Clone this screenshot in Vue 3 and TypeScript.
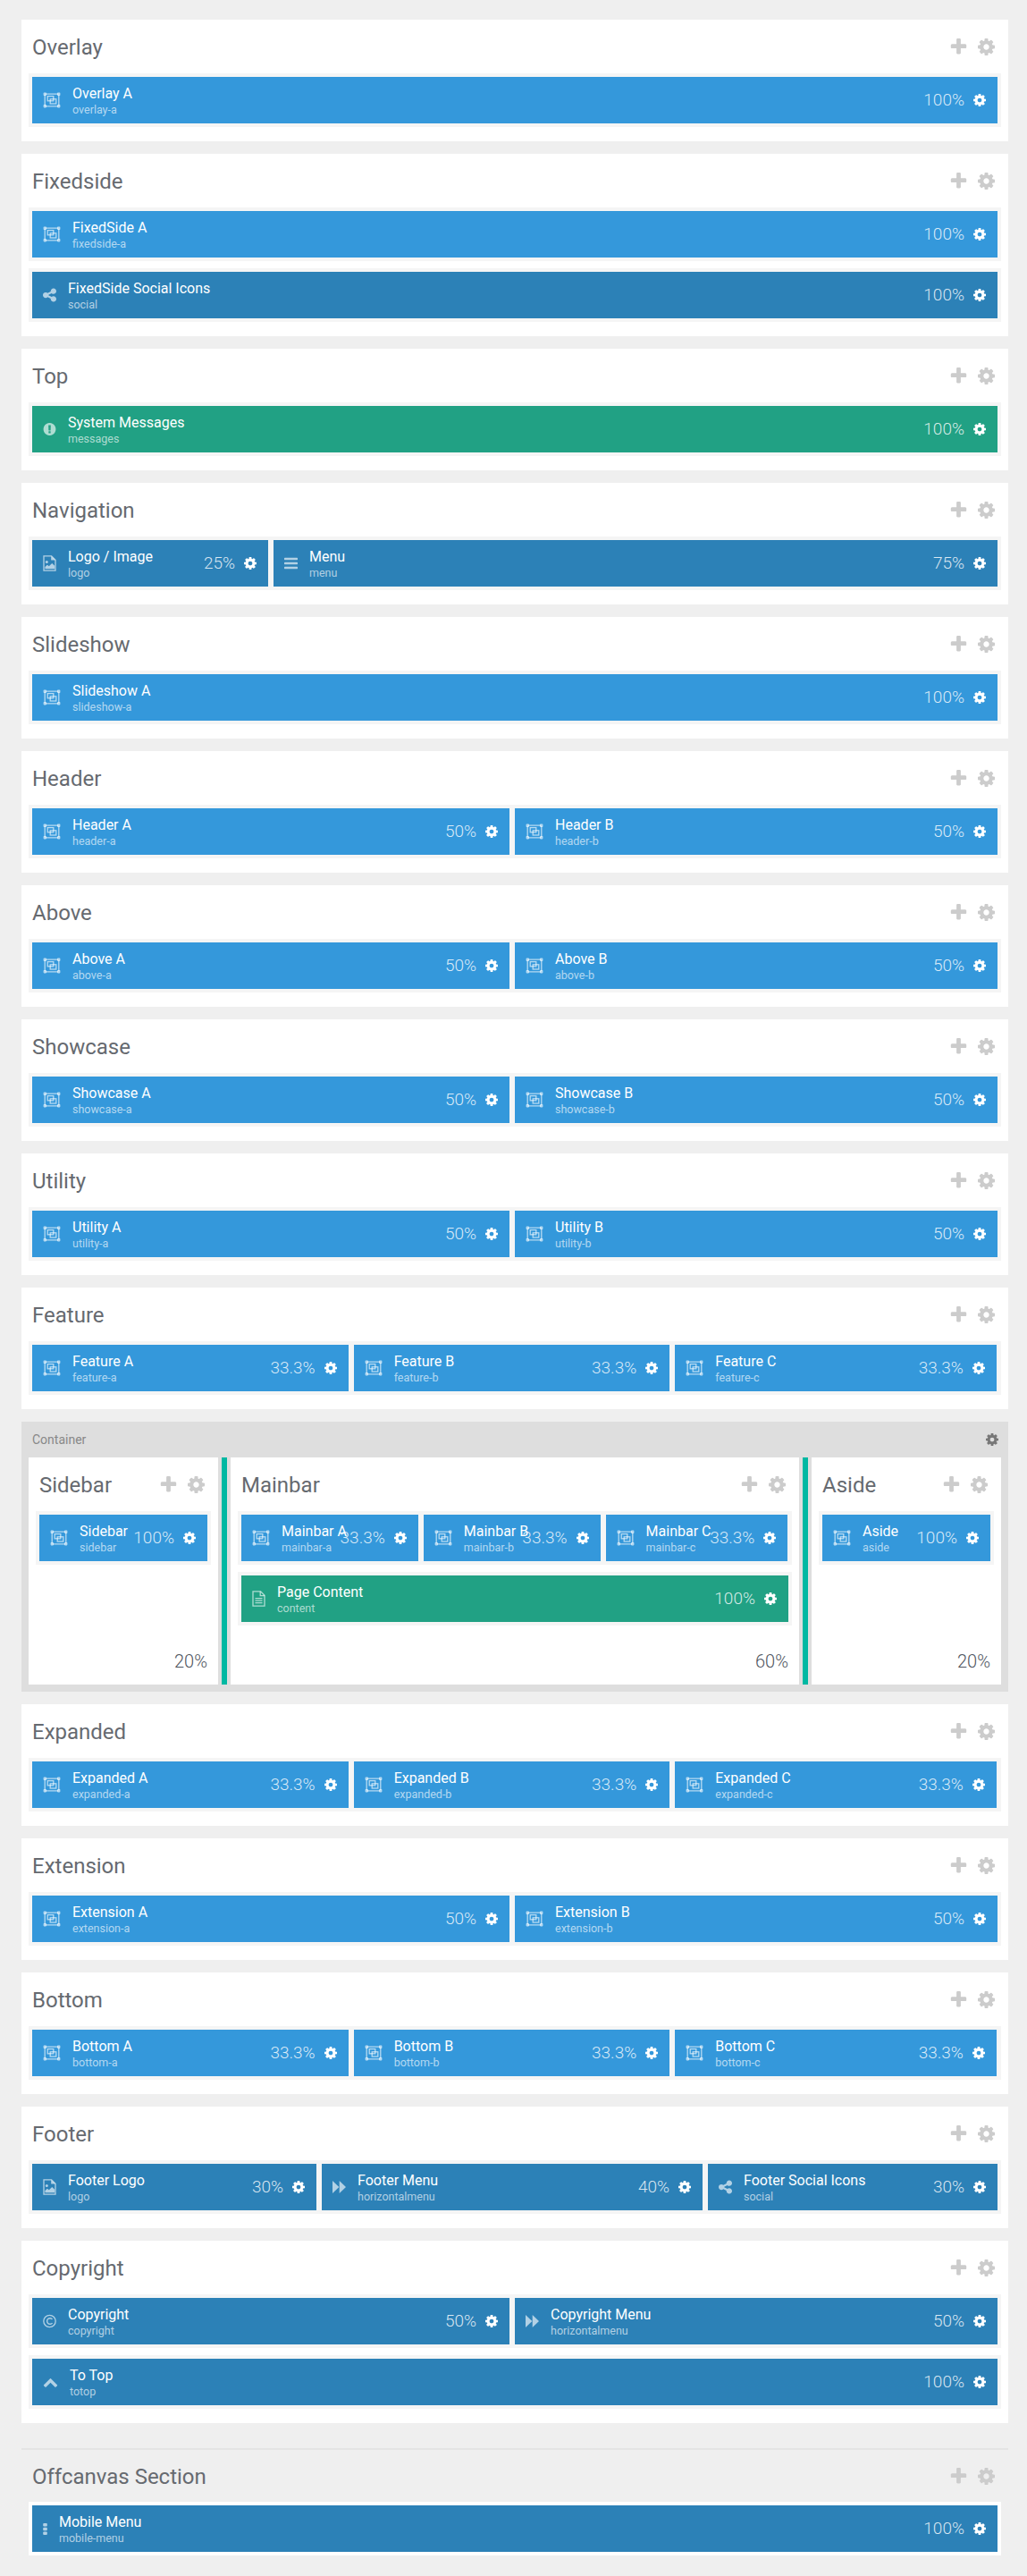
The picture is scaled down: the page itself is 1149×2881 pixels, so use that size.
<script setup lang="ts">
  type IconName = 'group' | 'share' | 'alert' | 'image' | 'bars' | 'file' | 'forward' | 'copyright' | 'up' | 'dots';

  interface Block {
    name: string;
    sub: string;
    size: string;
    icon: IconName;
    tone: 'blue' | 'dark' | 'green';
  }

  interface Section {
    title: string;
    rows: Block[][];
    share?: number;
    offcanvas?: boolean;
  }

  interface Group {
    label?: string;
    sections: Section[];
  }

  const block = (name: string, sub: string, size: string, icon: IconName = 'group', tone: Block['tone'] = 'blue'): Block => ({
    name,
    sub,
    size,
    icon,
    tone,
  });

  // particle positions: "Foo A" + "foo-a" for each letter
  const positions = (title: string, letters: string, size: string): Block[] =>
    letters.split('').map((l) => block(`${title} ${l.toUpperCase()}`, `${title.toLowerCase()}-${l}`, size));

  const plain = (title: string, ...rows: Block[][]): Group => ({ sections: [{ title, rows }] });

  const groups: Group[] = [
    plain('Overlay', [block('Overlay A', 'overlay-a', '100')]),
    plain(
      'Fixedside',
      [block('FixedSide A', 'fixedside-a', '100')],
      [block('FixedSide Social Icons', 'social', '100', 'share', 'dark')],
    ),
    plain('Top', [block('System Messages', 'messages', '100', 'alert', 'green')]),
    plain('Navigation', [block('Logo / Image', 'logo', '25', 'image', 'dark'), block('Menu', 'menu', '75', 'bars', 'dark')]),
    plain('Slideshow', positions('Slideshow', 'a', '100')),
    plain('Header', positions('Header', 'ab', '50')),
    plain('Above', positions('Above', 'ab', '50')),
    plain('Showcase', positions('Showcase', 'ab', '50')),
    plain('Utility', positions('Utility', 'ab', '50')),
    plain('Feature', positions('Feature', 'abc', '33.3')),
    {
      label: 'Container',
      sections: [
        { title: 'Sidebar', share: 20, rows: [[block('Sidebar', 'sidebar', '100')]] },
        {
          title: 'Mainbar',
          share: 60,
          rows: [positions('Mainbar', 'abc', '33.3'), [block('Page Content', 'content', '100', 'file', 'green')]],
        },
        { title: 'Aside', share: 20, rows: [[block('Aside', 'aside', '100')]] },
      ],
    },
    plain('Expanded', positions('Expanded', 'abc', '33.3')),
    plain('Extension', positions('Extension', 'ab', '50')),
    plain('Bottom', positions('Bottom', 'abc', '33.3')),
    plain('Footer', [
      block('Footer Logo', 'logo', '30', 'image', 'dark'),
      block('Footer Menu', 'horizontalmenu', '40', 'forward', 'dark'),
      block('Footer Social Icons', 'social', '30', 'share', 'dark'),
    ]),
    plain(
      'Copyright',
      [block('Copyright', 'copyright', '50', 'copyright', 'dark'), block('Copyright Menu', 'horizontalmenu', '50', 'forward', 'dark')],
      [block('To Top', 'totop', '100', 'up', 'dark')],
    ),
    {
      sections: [{ title: 'Offcanvas Section', offcanvas: true, rows: [[block('Mobile Menu', 'mobile-menu', '100', 'dots', 'dark')]] }],
    },
  ];

  // two gutters of 14px sit between the three columns of the container
  const columnStyle = (section: Section) =>
    section.share ? { flex: `0 0 calc((100% - 28px) * ${section.share / 100})` } : undefined;

  const cog =
    'M1152 896q0-106-75-181t-181-75-181 75-75 181 75 181 181 75 181-75 75-181zm512-109v222q0 12-8 23t-20 13l-185 28q-19 54-39 91 35 50 107 138 10 12 10 25t-9 23q-27 37-99 108t-94 71q-12 0-26-9l-138-108q-44 23-91 38-16 136-29 186-7 28-36 28h-222q-14 0-24.5-8.5t-11.5-21.5l-28-184q-49-16-90-37l-141 107q-10 9-25 9-14 0-25-11-126-114-165-168-7-10-7-23 0-12 8-23 15-21 51-66.5t54-70.5q-27-50-41-99l-183-27q-13-2-21-12.5t-8-23.5v-222q0-12 8-23t19-13l186-28q14-46 39-92-40-57-107-138-10-12-10-24 0-10 9-23 26-36 98.5-107.5t94.5-71.5q13 0 26 10l138 107q44-23 91-38 16-136 29-186 7-28 36-28h222q14 0 24.5 8.5t11.5 21.5l28 184q49 16 90 37l142-107q9-9 24-9 13 0 25 10 129 119 165 170 7 8 7 22 0 12-8 23-15 21-51 66.5t-54 70.5q26 50 41 98l183 28q13 2 21 12.5t8 23.5z';
  const plus =
    'M1600 736v192q0 40-28 68t-68 28h-416v416q0 40-28 68t-68 28h-192q-40 0-68-28t-28-68v-416h-416q-40 0-68-28t-28-68v-192q0-40 28-68t68-28h416v-416q0-40 28-68t68-28h192q40 0 68 28t28 68v416h416q40 0 68 28t28 68z';

  // filled glyphs drawn on a 1792 grid, width is the advance of the glyph in px
  const filledIcons: Partial<Record<IconName, { d: string; width: number; box: string }>> = {
    share: {
      width: 15,
      box: '128 128 1536 1536',
      d: 'M1344 1024q133 0 226.5 93.5t93.5 226.5-93.5 226.5-226.5 93.5-226.5-93.5-93.5-226.5q0-12 2-34l-360-180q-92 86-218 86-133 0-226.5-93.5t-93.5-226.5 93.5-226.5 226.5-93.5q126 0 218 86l360-180q-2-22-2-34 0-133 93.5-226.5t226.5-93.5 226.5 93.5 93.5 226.5-93.5 226.5-226.5 93.5q-126 0-218-86l-360 180q2 22 2 34t-2 34l360 180q92-86 218-86z',
    },
    alert: {
      width: 15,
      box: '64 64 1664 1664',
      d: 'M896 128q209 0 385.5 103t279.5 279.5 103 385.5-103 385.5-279.5 279.5-385.5 103-385.5-103-279.5-279.5-103-385.5 103-385.5 279.5-279.5 385.5-103zm128 1247v-190q0-14-9-23.5t-22-9.5h-192q-13 0-23 10t-10 23v190q0 13 10 23t23 10h192q13 0 22-9.5t9-23.5zm-2-344l18-621q0-12-10-18-10-8-24-8h-220q-14 0-24 8-10 6-10 18l17 621q0 10 10 17.5t24 7.5h185q14 0 23.5-7.5t10.5-17.5z',
    },
    bars: {
      width: 15,
      box: '128 128 1536 1536',
      d: 'M1664 1344v128q0 26-19 45t-45 19h-1408q-26 0-45-19t-19-45v-128q0-26 19-45t45-19h1408q26 0 45 19t19 45zm0-512v128q0 26-19 45t-45 19h-1408q-26 0-45-19t-19-45v-128q0-26 19-45t45-19h1408q26 0 45 19t19 45zm0-512v128q0 26-19 45t-45 19h-1408q-26 0-45-19t-19-45v-128q0-26 19-45t45-19h1408q26 0 45 19t19 45z',
    },
    up: {
      width: 17,
      box: '0 0 1792 1792',
      d: 'M1683 1331l-166 165q-19 19-45 19t-45-19l-531-531-531 531q-19 19-45 19t-45-19l-166-165q-19-19-19-45.5t19-45.5l742-741q19-19 45-19t45 19l742 741q19 19 19 45.5t-19 45.5z',
    },
  };
</script>

<template>
  <div class="page">
    <div v-for="group in groups" :key="group.sections[0].title" :class="group.label ? 'container' : 'single'">
      <div v-if="group.label" class="container-head">
        <span>{{ group.label }}</span>
        <svg class="container-cog" viewBox="128 128 1536 1536"><path :d="cog" /></svg>
      </div>

      <div class="sections">
        <template v-for="(section, i) in group.sections" :key="section.title">
          <div v-if="i > 0" class="gutter"></div>
          <section
            class="section"
            :class="{ 'section--offcanvas': section.offcanvas, 'section--column': section.share }"
            :style="columnStyle(section)"
          >
            <header class="section-head">
              <h2 class="section-title">{{ section.title }}</h2>
              <svg class="head-plus" viewBox="128 128 1536 1536"><path :d="plus" /></svg>
              <svg class="head-cog" viewBox="128 128 1536 1536"><path :d="cog" /></svg>
            </header>

            <div v-for="(row, r) in section.rows" :key="r" class="row">
              <div v-for="item in row" :key="item.name" class="cell" :style="{ flexBasis: `${item.size}%` }">
                <div class="block" :class="`block--${item.tone}`">
                  <svg
                    v-if="filledIcons[item.icon]"
                    class="icon"
                    :style="{ width: `${filledIcons[item.icon]!.width}px` }"
                    :viewBox="filledIcons[item.icon]!.box"
                  >
                    <path :d="filledIcons[item.icon]!.d" />
                  </svg>

                  <svg v-else-if="item.icon === 'group'" class="icon icon--group" viewBox="0 0 20 18">
                    <g fill="none" stroke="currentColor" stroke-width="1.3">
                      <path d="M3 2.2h14M3 15.8h14M2.2 3v12M17.8 3v12" />
                      <rect x="5.2" y="4.6" width="6.6" height="5.2" />
                      <rect x="8.2" y="7.8" width="6.6" height="5.2" />
                    </g>
                    <g>
                      <rect x="0.6" y="0.6" width="3.4" height="3.4" rx="0.8" />
                      <rect x="16" y="0.6" width="3.4" height="3.4" rx="0.8" />
                      <rect x="0.6" y="14" width="3.4" height="3.4" rx="0.8" />
                      <rect x="16" y="14" width="3.4" height="3.4" rx="0.8" />
                    </g>
                  </svg>

                  <svg v-else-if="item.icon === 'image'" class="icon icon--doc" viewBox="0 0 15 18">
                    <path fill="none" stroke="currentColor" stroke-width="1.3" d="M1 .9h8.6L14 5.2v11.9H1z" />
                    <path d="M9.2.9v4.7H14z" />
                    <circle cx="4.3" cy="7.6" r="1.5" />
                    <path d="M2.4 15.2v-2.3l2.5-2.2 1.9 1.5 3.4-3.2 2.9 2.7v3.5z" />
                  </svg>

                  <svg v-else-if="item.icon === 'file'" class="icon icon--doc" viewBox="0 0 15 18">
                    <path fill="none" stroke="currentColor" stroke-width="1.3" d="M1 .9h8.6L14 5.2v11.9H1z" />
                    <path fill="none" stroke="currentColor" stroke-width="1.3" d="M9.2.9v4.7H14" />
                    <path d="M3.5 8h8v1.3h-8zM3.5 10.5h8v1.3h-8zM3.5 13h8v1.3h-8z" />
                  </svg>

                  <svg v-else-if="item.icon === 'forward'" class="icon icon--forward" viewBox="0 0 15 14">
                    <path d="M0 0l7.3 7L0 14zM7.7 0L15 7l-7.3 7z" />
                  </svg>

                  <svg v-else-if="item.icon === 'copyright'" class="icon icon--doc" viewBox="0 0 15 15">
                    <circle cx="7.5" cy="7.5" r="6.7" fill="none" stroke="currentColor" stroke-width="1.3" />
                    <path fill="none" stroke="currentColor" stroke-width="1.4" d="M10.5 5.4a3.3 3.3 0 1 0 0 4.2" />
                  </svg>

                  <svg v-else class="icon icon--dots" viewBox="0 0 5 13">
                    <rect x="0.2" y="0" width="4.6" height="3.6" rx="1" />
                    <rect x="0.2" y="4.7" width="4.6" height="3.6" rx="1" />
                    <rect x="0.2" y="9.4" width="4.6" height="3.6" rx="1" />
                  </svg>

                  <div class="block-text">
                    <div class="block-name">{{ item.name }}</div>
                    <div class="block-sub">{{ item.sub }}</div>
                  </div>
                  <span class="block-size">{{ item.size }}%</span>
                  <svg class="block-cog" viewBox="128 128 1536 1536"><path :d="cog" /></svg>
                </div>
              </div>
            </div>

            <div v-if="section.share" class="section-foot">{{ section.share }}%</div>
          </section>
        </template>
      </div>
    </div>
  </div>
</template>

<style>
  body {
    background: #efefef;
  }
</style>

<style scoped>
  .page {
    display: flex;
    flex-direction: column;
    gap: 14px;
    padding: 22px 21px 23px 24px;
    font-family: Roboto, 'Liberation Sans', sans-serif;
  }

  .sections {
    display: flex;
    align-items: stretch;
  }

  .section {
    flex: 1;
    min-width: 0;
    box-sizing: border-box;
    padding: 0 8px 16px;
    background: #fff;
    display: flex;
    flex-direction: column;
  }

  .section--offcanvas {
    margin-top: 14px;
    background: transparent;
    border-top: 2px solid #e4e4e4;
    padding-bottom: 0;
  }

  .section--offcanvas .section-head {
    height: 58px;
  }

  .section--offcanvas .row {
    background: #fff;
  }

  .section--column {
    padding-bottom: 14px;
  }

  .section-head {
    height: 60px;
    display: flex;
    align-items: center;
    padding: 0 7px 0 4px;
  }

  .section-title {
    flex: 1;
    margin: 2px 0 0;
    font-size: 24px;
    font-weight: 400;
    color: #666a70;
  }

  .head-plus,
  .head-cog {
    fill: #ccc;
    height: 19px;
    width: 19px;
    flex: none;
  }

  .head-cog {
    margin-left: 12px;
  }

  .row {
    display: flex;
    padding: 4px;
    background: #f5f5f5;
  }

  .row + .row {
    margin-top: 8px;
  }

  .cell {
    flex: 0 0 auto;
    box-sizing: border-box;
    min-width: 0;
    padding-right: 6px;
  }

  .cell:last-child {
    padding-right: 0;
  }

  .block {
    height: 52px;
    display: flex;
    align-items: center;
    padding: 0 13px 0 12px;
    color: rgba(255, 255, 255, 0.64);
  }

  .block--blue {
    background: #3498db;
  }

  .block--dark {
    background: #2c81b7;
  }

  .block--green {
    background: #21a184;
  }

  .icon {
    flex: none;
    margin-right: 13px;
    height: 18px;
    width: 20px;
    fill: currentColor;
  }

  .icon--doc {
    width: 15px;
  }

  .icon--forward {
    width: 15px;
    height: 14px;
  }

  .icon--dots {
    width: 5px;
    height: 13px;
  }

  .block-text {
    flex: 1;
    min-width: 0;
    white-space: nowrap;
  }

  .block-name {
    font-size: 16px;
    line-height: 20px;
    color: #fff;
  }

  .block-sub {
    font-size: 12.5px;
    line-height: 15px;
  }

  .block-size {
    flex: none;
    font-size: 19px;
    font-weight: 300;
    color: rgba(255, 255, 255, 0.82);
    margin-right: 10px;
    position: relative;
    top: -1px;
  }

  .block-cog {
    flex: none;
    width: 14px;
    height: 14px;
    fill: #fff;
  }

  .section-foot {
    margin-top: auto;
    padding: 28px 4px 0 0;
    text-align: right;
    font-size: 20px;
    line-height: 24px;
    font-weight: 300;
    color: #4f5560;
  }

  .container {
    background: #dedede;
    padding: 0 8px 8px;
  }

  .container-head {
    height: 40px;
    display: flex;
    align-items: center;
    justify-content: space-between;
    padding: 0 3px 0 4px;
    font-size: 14px;
    color: #888;
  }

  .container-cog {
    width: 14px;
    height: 14px;
    fill: #777;
  }

  .gutter {
    flex: none;
    width: 6px;
    margin: 0 4px;
    background: #00b8a2;
  }
</style>
